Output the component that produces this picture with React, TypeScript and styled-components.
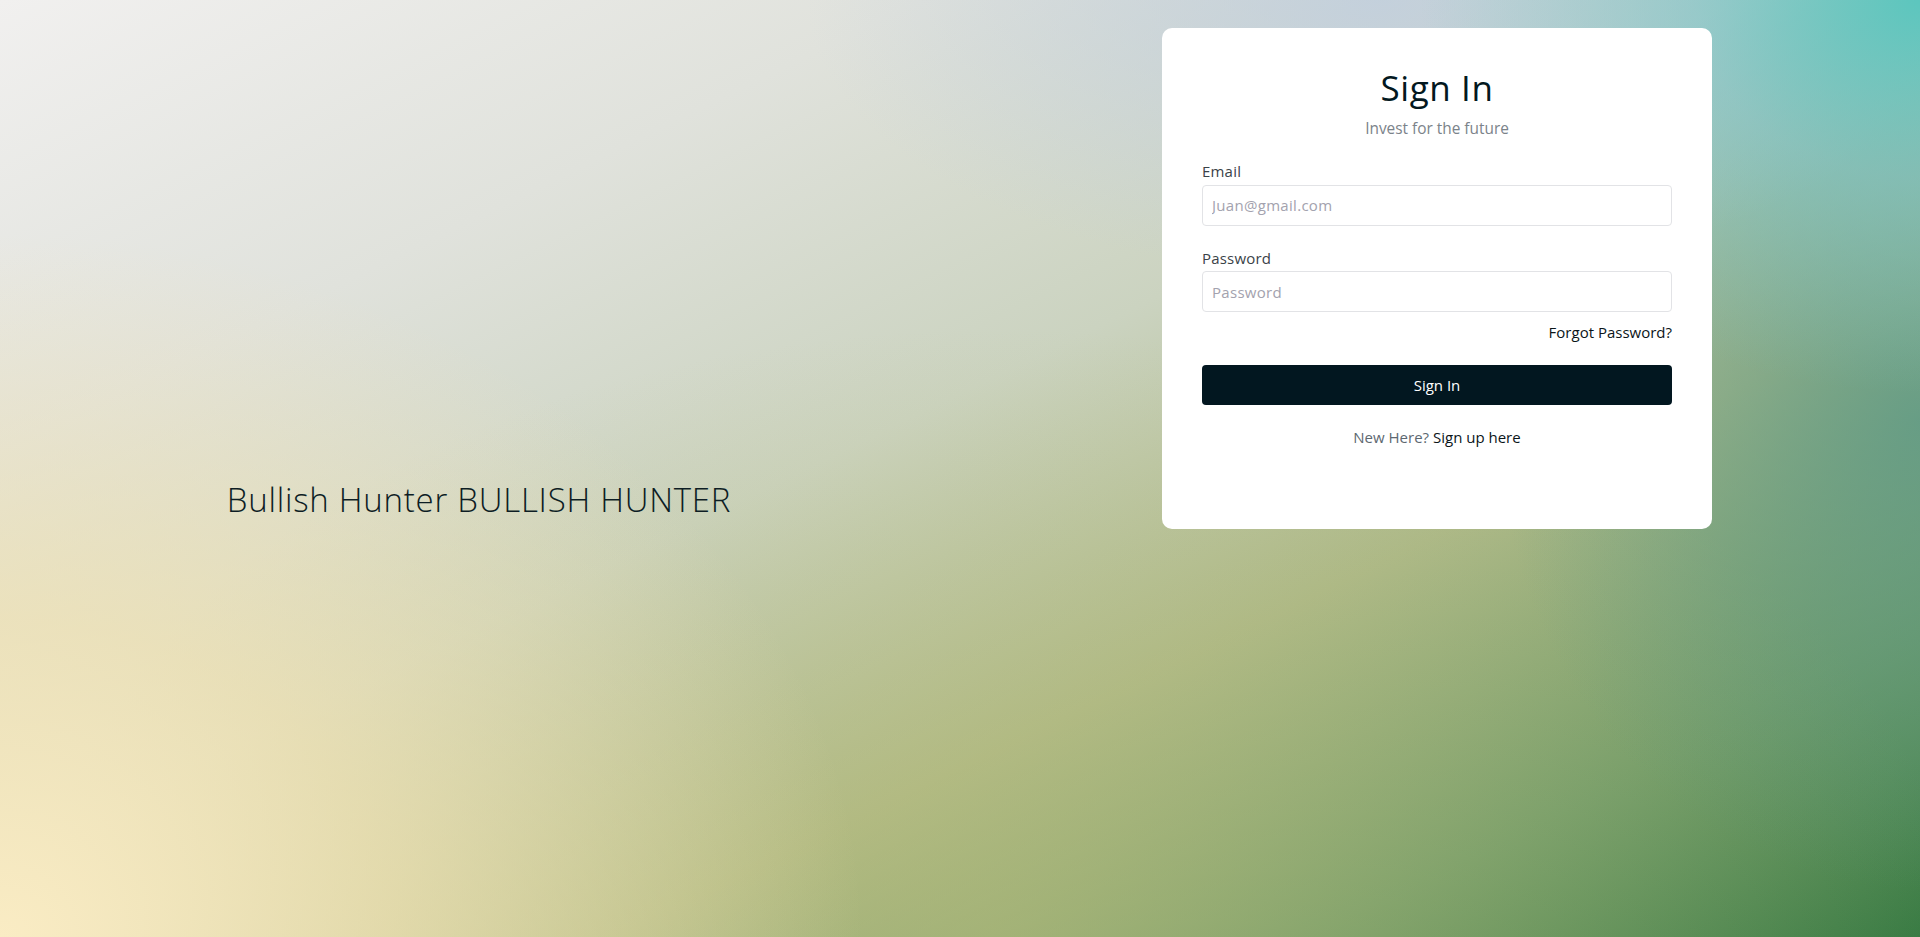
import React from "react";
import styled, { createGlobalStyle } from "styled-components";

const GlobalStyle = createGlobalStyle`
  html, body {
    margin: 0;
    padding: 0;
    height: 100%;
    overflow: hidden;
  }
  body {
    font-family: "Open Sans", "Liberation Sans", sans-serif;
  }
  * { box-sizing: border-box; }
`;

const Page = styled.main`
  width: 100%;
  height: 100vh;
  display: grid;
  grid-template-columns: 1fr 1fr;
  padding-right: 4px;
  background:
    radial-gradient(ellipse 26% 42% at 100% 0%, rgba(92, 198, 190, 1) 0%, rgba(120, 196, 200, 0.6) 45%, rgba(150, 200, 215, 0) 100%),
    radial-gradient(ellipse 30% 30% at 72% 0%, rgba(190, 205, 225, 0.75) 0%, rgba(200, 212, 226, 0) 100%),
    radial-gradient(ellipse 22% 50% at 100% 45%, rgba(88, 152, 136, 0.75) 0%, rgba(100, 160, 145, 0) 100%),
    radial-gradient(ellipse 45% 75% at 0% 100%, rgba(250, 236, 196, 1) 0%, rgba(244, 228, 180, 0.7) 45%, rgba(240, 225, 175, 0) 100%),
    radial-gradient(ellipse 50% 65% at 52% 100%, rgba(190, 190, 120, 0.5) 0%, rgba(190, 190, 120, 0) 100%),
    linear-gradient(to bottom right, #f1f0ef 0%, #e0e2dc 24%, #cbd3c0 46%, #abb888 66%, #6e9a68 84%, #377a43 100%);
`;

const Hero = styled.section`
  display: flex;
  align-items: center;
  justify-content: center;
  padding-top: 62px;
`;

const Brand = styled.h1`
  margin: 0;
  font-family: "Open Sans", sans-serif;
  font-weight: 300;
  font-size: 33px;
  line-height: 1.2;
  color: #0d1d24;
  letter-spacing: 0.75px;
`;

const Side = styled.section`
  display: flex;
  justify-content: center;
  align-items: flex-start;
  padding-top: 28px;
`;

const Card = styled.div`
  width: 550px;
  background: #ffffff;
  border-radius: 10px;
  padding: 40px 40px 81px;
  display: flex;
  flex-direction: column;
`;

const Title = styled.h2`
  margin: 0;
  text-align: center;
  font-size: 35px;
  font-weight: 400;
  line-height: 1.17;
  letter-spacing: 0.6px;
  color: #031820;
`;

const Subtitle = styled.p`
  margin: 8px 0 0;
  text-align: center;
  font-size: 15.4px;
  line-height: 1.5;
  color: #7b838a;
`;

const Field = styled.div<{ $first?: boolean }>`
  display: flex;
  flex-direction: column;
  margin-top: ${(p) => (p.$first ? "20px" : "21px")};
`;

const Label = styled.label`
  font-size: 15px;
  line-height: 1.5;
  color: #3a4248;
  margin-bottom: 2px;
  letter-spacing: 0.2px;
`;

const Input = styled.input`
  height: 41px;
  width: 100%;
  border: 1px solid #e2e3e6;
  border-radius: 4px;
  padding: 0 9px;
  font-family: "Open Sans", sans-serif;
  font-size: 15px;
  letter-spacing: 0.3px;
  color: #212529;
  outline: none;
  &::placeholder {
    color: #a3a2ae;
  }
`;

const ForgotRow = styled.div`
  display: flex;
  justify-content: flex-end;
  margin-top: 9px;
`;

const DarkLink = styled.a`
  font-size: 15px;
  line-height: 1.5;
  color: #0b1519;
  text-decoration: none;
  font-weight: 500;
  cursor: pointer;
`;

const Button = styled.button`
  margin-top: 21px;
  height: 40px;
  width: 100%;
  border: none;
  border-radius: 4px;
  background: #021720;
  color: #ffffff;
  font-family: "Open Sans", sans-serif;
  font-size: 15px;
  cursor: pointer;
`;

const Footer = styled.p`
  margin: 21px 0 0;
  text-align: center;
  font-size: 15px;
  line-height: 1.5;
  color: #5d6871;
`;

export default function App() {
  return (
    <>
      <GlobalStyle />
      <Page>
        <Hero>
          <Brand>Bullish Hunter BULLISH HUNTER</Brand>
        </Hero>
        <Side>
          <Card>
            <Title>Sign In</Title>
            <Subtitle>Invest for the future</Subtitle>
            <Field $first>
              <Label htmlFor="email">Email</Label>
              <Input id="email" type="email" placeholder="Juan@gmail.com" />
            </Field>
            <Field>
              <Label htmlFor="password">Password</Label>
              <Input id="password" type="password" placeholder="Password" />
            </Field>
            <ForgotRow>
              <DarkLink>Forgot Password?</DarkLink>
            </ForgotRow>
            <Button type="button">Sign In</Button>
            <Footer>
              New Here? <DarkLink>Sign up here</DarkLink>
            </Footer>
          </Card>
        </Side>
      </Page>
    </>
  );
}
